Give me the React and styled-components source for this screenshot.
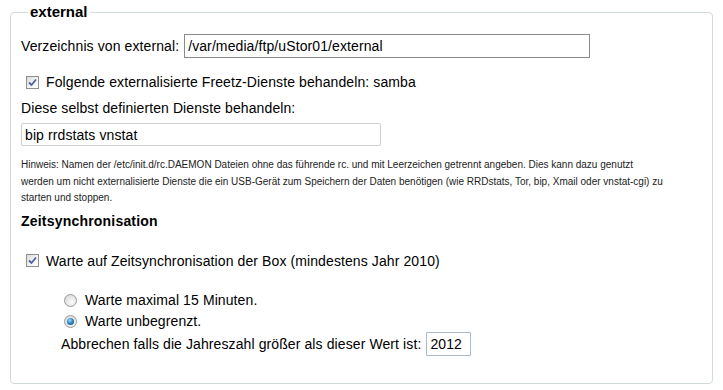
import React from "react";
import styled, { createGlobalStyle } from "styled-components";

const Global = createGlobalStyle`
  html, body { margin: 0; padding: 0; background: #fff; }
  body { font-family: "Liberation Sans", Arial, sans-serif; color: #000; }
`;

const Page = styled.div`
  padding: 0 10px 0 10px;
  width: 723px;
  height: 390px;
  box-sizing: border-box;
  overflow: hidden;
`;

const Fieldset = styled.fieldset`
  margin: 0;
  width: 703px;
  height: 384px;
  box-sizing: border-box;
  border: 1px solid #d3dada;
  border-radius: 4px;
  padding: 0 10px;
  display: flex;
  flex-direction: column;
`;

const Legend = styled.legend`
  font-weight: bold;
  font-size: 15px;
  line-height: 24px;
  margin-left: 7px;
  padding: 0 2px;
`;

const Row = styled.div`
  display: flex;
  align-items: center;
  font-size: 14px;
  letter-spacing: 0.1px;
  height: ${(p) => p.$h || 20}px;
  margin-top: ${(p) => p.$mt || 0}px;
  padding-left: ${(p) => p.$indent || 0}px;
`;

const Label = styled.span`
  white-space: nowrap;
`;

const TextInput = styled.div`
  box-sizing: border-box;
  height: ${(p) => p.$h}px;
  width: ${(p) => p.$w}px;
  border: 1px solid ${(p) => p.$border};
  border-radius: ${(p) => p.$radius || 0}px;
  margin-left: ${(p) => p.$ml || 0}px;
  margin-top: ${(p) => p.$mt || 0}px;
  display: flex;
  align-items: center;
  padding-left: 3px;
  font-size: 14px;
  letter-spacing: 0.1px;
  background: #fff;
  white-space: nowrap;
`;

const Caption = styled.div`
  font-size: 14px;
  letter-spacing: 0.1px;
  line-height: 16px;
  margin-top: ${(p) => p.$mt || 0}px;
`;

const Hint = styled.p`
  margin: 11px 0 0;
  font-size: 10px;
  line-height: 16.5px;
  color: #222;
  white-space: nowrap;
`;

const Heading = styled.div`
  font-weight: bold;
  font-size: 14px;
  letter-spacing: 0.2px;
  line-height: 16px;
  margin-top: 6px;
`;

const Box = styled.span`
  box-sizing: border-box;
  width: 13px;
  height: 13px;
  border: 1px solid #8e8f8f;
  background: linear-gradient(135deg, #dcdcdc 0%, #f4f4f4 60%, #fff 100%);
  display: inline-flex;
  align-items: center;
  justify-content: center;
  margin: 0 7px 0 5px;
  flex: none;
`;

const Radio = styled.span`
  box-sizing: border-box;
  width: 13px;
  height: 13px;
  border-radius: 50%;
  border: 1px solid #9a9a9a;
  background: radial-gradient(circle at 60% 65%, #fbfbfb 0%, #e3e3e3 60%, #cfcfcf 100%);
  display: inline-flex;
  align-items: center;
  justify-content: center;
  margin-right: 8px;
  flex: none;
`;

const Dot = styled.span`
  width: 7px;
  height: 7px;
  border-radius: 50%;
  background: radial-gradient(circle at 40% 35%, #a9d6ef 0%, #2f8cc6 45%, #143f70 100%);
`;

function Check() {
  return (
    <Box>
      <svg width="9" height="9" viewBox="0 0 9 9">
        <path d="M1 4.5 L3.5 7 L8 1.5" fill="none" stroke="#4d61a0" strokeWidth="1.8" />
      </svg>
    </Box>
  );
}

export default function App() {
  return (
    <Page>
      <Global />
      <Fieldset>
        <Legend>external</Legend>
        <Row $h={24} $mt={10}>
          <Label>Verzeichnis von external:</Label>
          <TextInput $w={406} $h={24} $border="#8a8a8a" $ml={5}>
            /var/media/ftp/uStor01/external
          </TextInput>
        </Row>
        <Row $mt={14}>
          <Check />
          <Label>Folgende externalisierte Freetz-Dienste behandeln: samba</Label>
        </Row>
        <Caption $mt={8}>Diese selbst definierten Dienste behandeln:</Caption>
        <TextInput $w={360} $h={23} $border="#cfcfcf" $radius={2} $mt={7}>
          bip rrdstats vnstat
        </TextInput>
        <Hint>
          Hinweis: Namen der /etc/init.d/rc.DAEMON Dateien ohne das führende rc. und mit Leerzeichen getrennt angeben. Dies kann dazu genutzt
          <br />
          werden um nicht externalisierte Dienste die ein USB-Gerät zum Speichern der Daten benötigen (wie RRDstats, Tor, bip, Xmail oder vnstat-cgi) zu
          <br />
          starten und stoppen.
        </Hint>
        <Heading>Zeitsynchronisation</Heading>
        <Row $mt={22}>
          <Check />
          <Label>Warte auf Zeitsynchronisation der Box (mindestens Jahr 2010)</Label>
        </Row>
        <Row $mt={19} $h={21} $indent={43}>
          <Radio />
          <Label>Warte maximal 15 Minuten.</Label>
        </Row>
        <Row $h={21} $indent={43}>
          <Radio>
            <Dot />
          </Radio>
          <Label>Warte unbegrenzt.</Label>
        </Row>
        <Row $h={24} $indent={40}>
          <Label>Abbrechen falls die Jahreszahl größer als dieser Wert ist:</Label>
          <TextInput $w={45} $h={24} $border="#abb9c4" $radius={1} $ml={5}>
            2012
          </TextInput>
        </Row>
      </Fieldset>
    </Page>
  );
}
